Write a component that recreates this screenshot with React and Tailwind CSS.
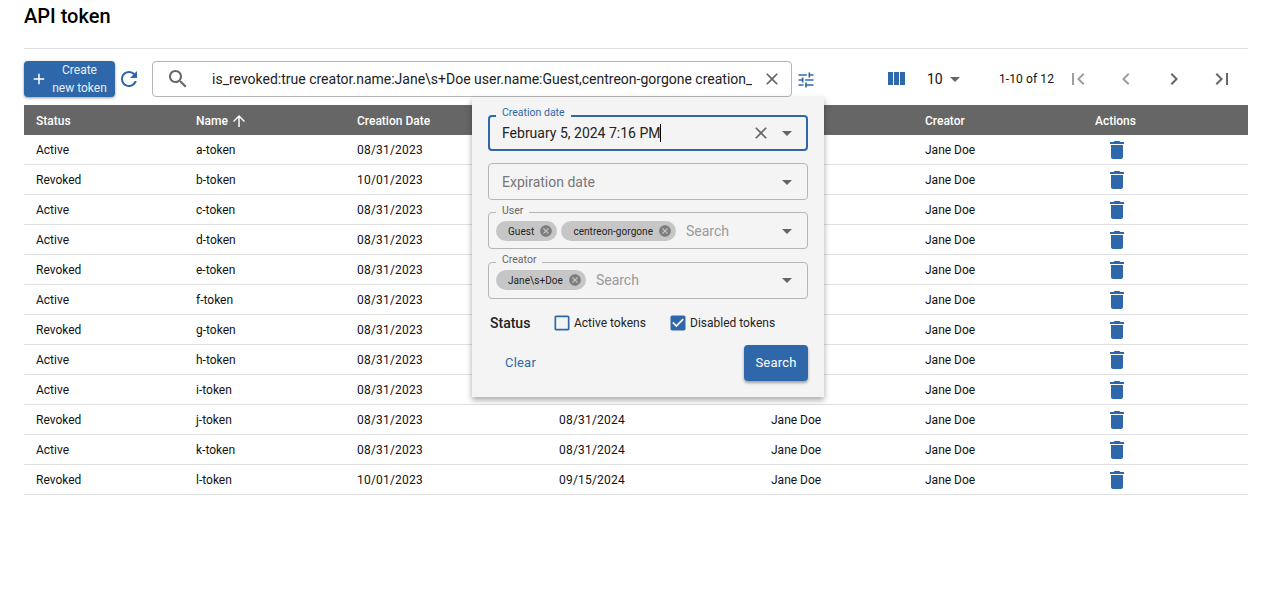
import React from 'react';

const paths = {
  add: 'M19 13h-6v6h-2v-6H5v-2h6V5h2v6h6v2z',
  refresh: 'M17.65 6.35C16.2 4.9 14.21 4 12 4c-4.42 0-7.99 3.58-7.99 8s3.57 8 7.99 8c3.73 0 6.84-2.55 7.73-6h-2.08c-.82 2.33-3.04 4-5.65 4-3.31 0-6-2.69-6-6s2.69-6 6-6c1.66 0 3.14.69 4.22 1.78L13 11h7V4l-2.35 2.35z',
  search: 'M15.5 14h-.79l-.28-.27C15.41 12.59 16 11.11 16 9.5 16 5.91 13.09 3 9.5 3S3 5.91 3 9.5 5.91 16 9.5 16c1.61 0 3.09-.59 4.23-1.57l.27.28v.79l5 4.99L20.49 19l-4.99-5zm-6 0C7.01 14 5 11.99 5 9.5S7.01 5 9.5 5 14 7.01 14 9.5 11.99 14 9.5 14z',
  close: 'M19 6.41 17.59 5 12 10.59 6.41 5 5 6.41 10.59 12 5 17.59 6.41 19 12 13.41 17.59 19 19 17.59 13.41 12z',
  tune: 'M3 17v2h6v-2H3zM3 5v2h10V5H3zm10 16v-2h8v-2h-8v-2h-2v6h2zM7 9v2H3v2h4v2h2V9H7zm14 4v-2H11v2h10zm-6-4h2V7h4V5h-4V3h-2v6z',
  columns: 'M10 18h5V5h-5v13zm-6 0h5V5H4v13zM16 5v13h5V5h-5z',
  drop: 'M7 10l5 5 5-5z',
  first: 'M18.41 16.59L13.82 12l4.59-4.59L17 6l-6 6 6 6zM6 6h2v12H6z',
  last: 'M5.59 7.41L10.18 12l-4.59 4.59L7 18l6-6-6-6zM16 6h2v12h-2z',
  prev: 'M15.41 7.41 14 6l-6 6 6 6 1.41-1.41L10.83 12z',
  next: 'M10 6 8.59 7.41 13.17 12l-4.58 4.59L10 18l6-6z',
  trash: 'M6 19c0 1.1.9 2 2 2h8c1.1 0 2-.9 2-2V7H6v12zM19 4h-3.5l-1-1h-5l-1 1H5v2h14V4z',
  up: 'M4 12l1.41 1.41L11 7.83V20h2V7.83l5.58 5.59L20 12l-8-8-8 8z',
  cancel: 'M12 2C6.47 2 2 6.47 2 12s4.47 10 10 10 10-4.47 10-10S17.53 2 12 2zm5 13.59L15.59 17 12 13.41 8.41 17 7 15.59 10.59 12 7 8.41 8.41 7 12 10.59 15.59 7 17 8.41 13.41 12 17 15.59z',
  unchecked: 'M19 5v14H5V5h14m0-2H5c-1.1 0-2 .9-2 2v14c0 1.1.9 2 2 2h14c1.1 0 2-.9 2-2V5c0-1.1-.9-2-2-2z',
  checked: 'M19 3H5c-1.11 0-2 .9-2 2v14c0 1.1.89 2 2 2h14c1.11 0 2-.9 2-2V5c0-1.1-.89-2-2-2zm-9 14l-5-5 1.41-1.41L10 14.17l7.59-7.59L19 8l-9 9z',
};

const Icon = ({ name, className }) => (
  <svg viewBox="0 0 24 24" fill="currentColor" className={`shrink-0 ${className}`}>
    <path d={paths[name]} />
  </svg>
);

const rowGrid = 'grid grid-cols-[160px_161px_202px_212px_154px_170px_165px] items-center';

const tokens = [
  ['Active', 'a-token', '08/31/2023', '08/31/2024'],
  ['Revoked', 'b-token', '10/01/2023', '09/15/2024'],
  ['Active', 'c-token', '08/31/2023', '08/31/2024'],
  ['Active', 'd-token', '08/31/2023', '08/31/2024'],
  ['Revoked', 'e-token', '08/31/2023', '08/31/2024'],
  ['Active', 'f-token', '08/31/2023', '08/31/2024'],
  ['Revoked', 'g-token', '08/31/2023', '08/31/2024'],
  ['Active', 'h-token', '08/31/2023', '08/31/2024'],
  ['Active', 'i-token', '08/31/2023', '08/31/2024'],
  ['Revoked', 'j-token', '08/31/2023', '08/31/2024'],
  ['Active', 'k-token', '08/31/2023', '08/31/2024'],
  ['Revoked', 'l-token', '10/01/2023', '09/15/2024'],
];

const Chip = ({ label }) => (
  <span className="flex items-center h-5 rounded-full bg-[#c6c6c6] pl-3 pr-1 gap-[5px] text-[10px] tracking-[0.06px] text-[#222] whitespace-nowrap">
    {label}
    <Icon name="cancel" className="w-[14px] h-[14px] text-[#7d7d7d]" />
  </span>
);

const Arrow = () => <Icon name="drop" className="w-6 h-6 text-[#666]" />;

const ChipField = ({ label, chips, labelClass, contentClass, className }) => (
  <fieldset className={`h-[42px] border border-[#b5b5b5] rounded-[4px] ${className}`}>
    <legend className="ml-[7px] px-[6px] text-[10.5px] leading-[11px] text-[#666]">
      <span className={`block ${labelClass}`}>{label}</span>
    </legend>
    <div className={`flex items-center h-[26px] pl-[7px] pr-2 ${contentClass}`}>
      <div className="flex items-center gap-1">
        {chips.map((chip) => <Chip key={chip} label={chip} />)}
      </div>
      <span className="flex-1 text-sm text-[#9a9a9a] ml-[10px]">Search</span>
      <Arrow />
    </div>
  </fieldset>
);

const FilterPopover = () => (
  <div className="absolute top-full left-[448px] z-10 w-[352px] h-[300px] bg-[#f4f4f4] shadow-[0_3px_6px_rgba(0,0,0,0.35)] px-4 pt-[13px] font-[Roboto,sans-serif]">
    <fieldset className="h-[41px] border-2 border-[#2e68aa] rounded-[4px]">
      <legend className="ml-[6px] px-[6px] text-[10.5px] leading-[12px] text-[#2e68aa]">
        <span className="block -translate-y-[3px]">Creation date</span>
      </legend>
      <div className="flex items-center h-[22px] pl-3 pr-[7px] text-sm text-[#222]">
        <span className="border-r border-black leading-[18px]">February 5, 2024 7:16 PM</span>
        <span className="flex-1" />
        <Icon name="close" className="w-5 h-5 text-[#666] mr-1" />
        <Arrow />
      </div>
    </fieldset>
    <div className="h-[37px] mt-3 border border-[#b5b5b5] rounded-[4px] flex items-center pt-[1px] pl-[13px] pr-2 text-sm text-[#777]">
      <span className="flex-1">Expiration date</span>
      <Arrow />
    </div>
    <ChipField label="User" chips={['Guest', 'centreon-gorgone']} className="mt-[7px]" labelClass="-translate-y-[2px]" />
    <ChipField label="Creator" chips={['Jane\\s+Doe']} className="mt-2" labelClass="-translate-y-[3px]" contentClass="-mt-[1px]" />
    <div className="flex items-center mt-3 h-6 pl-[2px]">
      <span className="text-sm font-medium text-[#222] w-[62px]">Status</span>
      <Icon name="unchecked" className="w-5 h-5 text-[#2e68aa]" />
      <span className="text-xs text-[#222] ml-[2px] w-[94px]">Active tokens</span>
      <Icon name="checked" className="w-5 h-5 text-[#2e68aa]" />
      <span className="text-xs text-[#222] ml-[2px]">Disabled tokens</span>
    </div>
    <div className="flex items-center justify-between mt-[10px]">
      <span className="text-[13px] tracking-[0.2px] text-[#2e68aa] ml-[17px]">Clear</span>
      <button className="w-16 h-9 rounded-[4px] bg-[#2e68aa] text-white text-[13px] tracking-[0.2px] shadow-[0_2px_3px_rgba(0,0,0,0.35)]">
        Search
      </button>
    </div>
  </div>
);

const App = () => {
  return (
    <div className="h-[590px] bg-white pl-6 pr-8 font-[Roboto,sans-serif] text-[#111] overflow-hidden">
      <h1 className="h-[49px] border-b border-[#e0e0e0] text-xl font-medium leading-[33px] text-black">API token</h1>

      <div className="relative flex items-center h-9 mt-3">
        <button className="flex items-center w-[91px] h-9 rounded-[4px] bg-[#2e68aa] text-white shadow-[0_1px_3px_rgba(0,0,0,0.4)] pl-[6px]">
          <Icon name="add" className="w-[18px] h-[18px]" />
          <span className="flex-1 text-xs leading-[18px] text-center pl-1 pr-2 whitespace-nowrap text-[#e8eef6]">
            Create<br />new token
          </span>
        </button>
        <Icon name="refresh" className="w-6 h-6 text-[#2e68aa] ml-[2px]" />

        <div className="flex items-center w-[640px] h-9 ml-[11px] border border-[#b5b5b5] rounded-[4px] pl-[13px] pr-[7px]">
          <Icon name="search" className="w-6 h-6 text-[#666]" />
          <div className="w-[540px] ml-[22px] overflow-hidden whitespace-nowrap text-sm text-[#222]">
            is_revoked:true creator.name:Jane\s+Doe user.name:Guest,centreon-gorgone creation_date:2024-02-05T19:16:00Z
          </div>
          <Icon name="close" className="w-5 h-5 text-[#666] ml-[10px]" />
        </div>
        <Icon name="tune" className="w-5 h-5 text-[#2e68aa] ml-1 mt-[1px]" />

        <Icon name="columns" className="w-6 h-6 text-[#2e68aa] ml-[68px]" />
        <span className="text-sm ml-[19px] w-4">10</span>
        <Icon name="drop" className="w-6 h-6 text-[#666]" />
        <span className="text-xs tracking-[0.1px] ml-[32px] w-[55px] whitespace-nowrap">1-10 of 12</span>
        <div className="flex">
          <span className="flex justify-center w-12"><Icon name="first" className="w-6 h-6 text-[#9e9e9e]" /></span>
          <span className="flex justify-center w-12"><Icon name="prev" className="w-6 h-6 text-[#9e9e9e]" /></span>
          <span className="flex justify-center w-12"><Icon name="next" className="w-6 h-6 text-[#666]" /></span>
          <span className="flex justify-center w-12"><Icon name="last" className="w-6 h-6 text-[#666]" /></span>
        </div>
        <FilterPopover />
      </div>

      <div className="mt-2">
        <div className={`${rowGrid} h-[30px] pt-[1px] bg-[#666] text-white text-xs font-medium`}>
          <span className="pl-3">Status</span>
          <span className="pl-3 flex items-center gap-[2px]">Name <Icon name="up" className="w-[18px] h-[18px]" /></span>
          <span className="pl-3">Creation Date</span>
          <span className="pl-3">Expiration Date</span>
          <span className="pl-3">User</span>
          <span className="pl-3">Creator</span>
          <span className="pl-3">Actions</span>
        </div>
        {tokens.map((token) => (
          <div key={token[1]} className={`${rowGrid} h-[30px] border-b border-[#e0e0e0] text-xs text-[#111]`}>
            <span className="pl-3">{token[0]}</span>
            <span className="pl-3">{token[1]}</span>
            <span className="pl-3 tracking-[0.2px]">{token[2]}</span>
            <span className="pl-3 tracking-[0.2px]">{token[3]}</span>
            <span className="pl-3">Jane Doe</span>
            <span className="pl-3">Jane Doe</span>
            <span className="pl-[22px]"><Icon name="trash" className="w-6 h-6 text-[#2e68aa]" /></span>
          </div>
        ))}
      </div>
    </div>
  );
};

export default App;
